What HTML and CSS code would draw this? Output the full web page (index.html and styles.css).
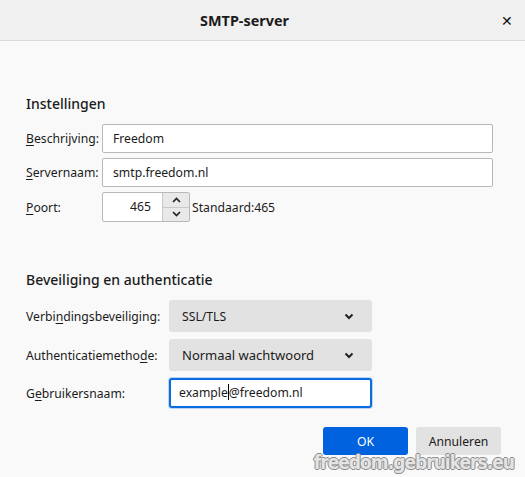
FILE: index.html
```html
<!DOCTYPE html>
<html lang="nl">

<head>
    <meta charset="UTF-8">
    <title>SMTP-server</title>
    <link rel="stylesheet" href="styles.css">
</head>

<body>
    <div class="titlebar">
        <div class="title">SMTP-server</div>
        <div class="close">&#x2715;</div>
    </div>

    <div class="content">
        <h2 class="heading first">Instellingen</h2>
        <div class="grid settings">
            <label><u>B</u>eschrijving:</label>
            <div class="field">Freedom</div>
            <label><u>S</u>ervernaam:</label>
            <div class="field">smtp.freedom.nl</div>
            <label><u>P</u>oort:</label>
            <div class="port-row">
                <div class="port">
                    <span class="port-value">465</span>
                    <div class="spin">
                        <span class="spin-btn">
                            <svg width="9" height="6" viewBox="0 0 9 6"><path d="M1 5 L4.5 1.5 L8 5" fill="none" stroke="#222" stroke-width="1.7"/></svg>
                        </span>
                        <span class="spin-btn">
                            <svg width="9" height="6" viewBox="0 0 9 6"><path d="M1 1 L4.5 4.5 L8 1" fill="none" stroke="#222" stroke-width="1.7"/></svg>
                        </span>
                    </div>
                </div>
                <span class="default">Standaard:465</span>
            </div>
        </div>

        <h2 class="heading second">Beveiliging en authenticatie</h2>
        <div class="grid security">
            <label>Verbi<u>n</u>dingsbeveiliging:</label>
            <div class="select">
                <span>SSL/TLS</span>
                <svg width="10" height="7" viewBox="0 0 10 7"><path d="M1.5 1.5 L5 5 L8.5 1.5" fill="none" stroke="#222" stroke-width="2"/></svg>
            </div>
            <label>Authenticatiemetho<u>d</u>e:</label>
            <div class="select">
                <span class="big">Normaal wachtwoord</span>
                <svg width="10" height="7" viewBox="0 0 10 7"><path d="M1.5 1.5 L5 5 L8.5 1.5" fill="none" stroke="#222" stroke-width="2"/></svg>
            </div>
            <label>G<u>e</u>bruikersnaam:</label>
            <div class="field focused">example<span class="caret"></span>@freedom.nl</div>
        </div>

        <div class="buttons">
            <button class="btn primary">OK</button>
            <button class="btn">Annuleren</button>
        </div>
    </div>

    <div class="watermark">freedom.gebruikers.eu</div>
</body>

</html>
```

FILE: styles.css
```css
body {
    margin: 0;
    width: 525px;
    height: 477px;
    overflow: hidden;
    position: relative;
    background-color: #f9f9f9;
    color: #1b1b1b;
    font-family: "Noto Sans", "Open Sans", sans-serif;
    font-size: 12.2px;
}

.titlebar {
    display: flex;
    align-items: center;
    height: 40px;
    background-color: #f0f0f0;
    border-bottom: 1px solid #d9d9d9;
}

.title {
    flex: 1;
    text-align: center;
    font-weight: bold;
    font-size: 14.4px;
}

.close {
    width: 36px;
    text-align: center;
    font-size: 14px;
    color: #111;
}

.content {
    padding: 0 24px 0 26px;
}

.heading {
    margin: 0;
    font-size: 14px;
    font-weight: 500;
    line-height: 20px;
}

.heading.first {
    margin-top: 53px;
    margin-bottom: 10px;
}

.heading.second {
    margin-top: 48px;
    margin-bottom: 10px;
}

.grid {
    display: grid;
    align-items: center;
}

.settings {
    grid-template-columns: 76px 391px;
    row-gap: 5px;
}

.security {
    grid-template-columns: 143px 203px;
    row-gap: 7px;
}

label u {
    text-decoration-thickness: 1px;
    text-underline-offset: 2px;
}

.field {
    box-sizing: border-box;
    height: 29px;
    line-height: 27px;
    padding: 0 10px;
    background: #fff;
    border: 1px solid #b8b8b8;
    border-radius: 2px;
}

.field.focused {
    height: 30px;
    line-height: 26px;
    padding: 0 8px;
    border: 2px solid #0a6cdf;
    border-radius: 3px;
    box-shadow: 0 0 0 1px rgba(10, 108, 223, 0.25);
}

.caret {
    display: inline-block;
    width: 1px;
    height: 16px;
    background: #000;
    vertical-align: -3px;
}

.port-row {
    display: flex;
    align-items: center;
}

.port {
    box-sizing: border-box;
    display: flex;
    width: 88px;
    height: 30px;
    background: #fff;
    border: 1px solid #b8b8b8;
    border-radius: 2px;
}

.port-value {
    flex: 1;
    text-align: right;
    line-height: 28px;
    padding-right: 11px;
}

.spin {
    display: flex;
    flex-direction: column;
    width: 26px;
    border-left: 1px solid #c8c8c8;
}

.spin-btn {
    flex: 1;
    display: flex;
    align-items: center;
    justify-content: center;
    background: #e9e9e9;
}

.spin-btn + .spin-btn {
    border-top: 1px solid #c8c8c8;
}

.default {
    margin-left: 2px;
}

.select {
    display: flex;
    align-items: center;
    justify-content: space-between;
    height: 32px;
    padding: 0 18px 0 13px;
    background: #e2e2e2;
    border-radius: 3px;
}

.select .big {
    font-size: 13px;
}

.buttons {
    display: flex;
    justify-content: flex-end;
    gap: 8px;
    margin-top: 19px;
}

.btn {
    width: 85px;
    height: 28px;
    border: none;
    border-radius: 3px;
    background: #e2e2e2;
    color: #1b1b1b;
    font-family: inherit;
    font-size: 12.2px;
}

.primary {
    background: #0062de;
    color: #fff;
}

/* watermark over the buttons */
.watermark {
    position: absolute;
    right: 11px;
    bottom: 4px;
    font-family: "DejaVu Sans Condensed", "DejaVu Sans", sans-serif;
    font-weight: bold;
    font-size: 19px;
    letter-spacing: -1px;
    color: #e4e4e4;
    text-shadow: -1px 0 #8a8a8a, 1px 0 #8a8a8a, 0 -1px #8a8a8a, 0 1px #8a8a8a;
}
```
